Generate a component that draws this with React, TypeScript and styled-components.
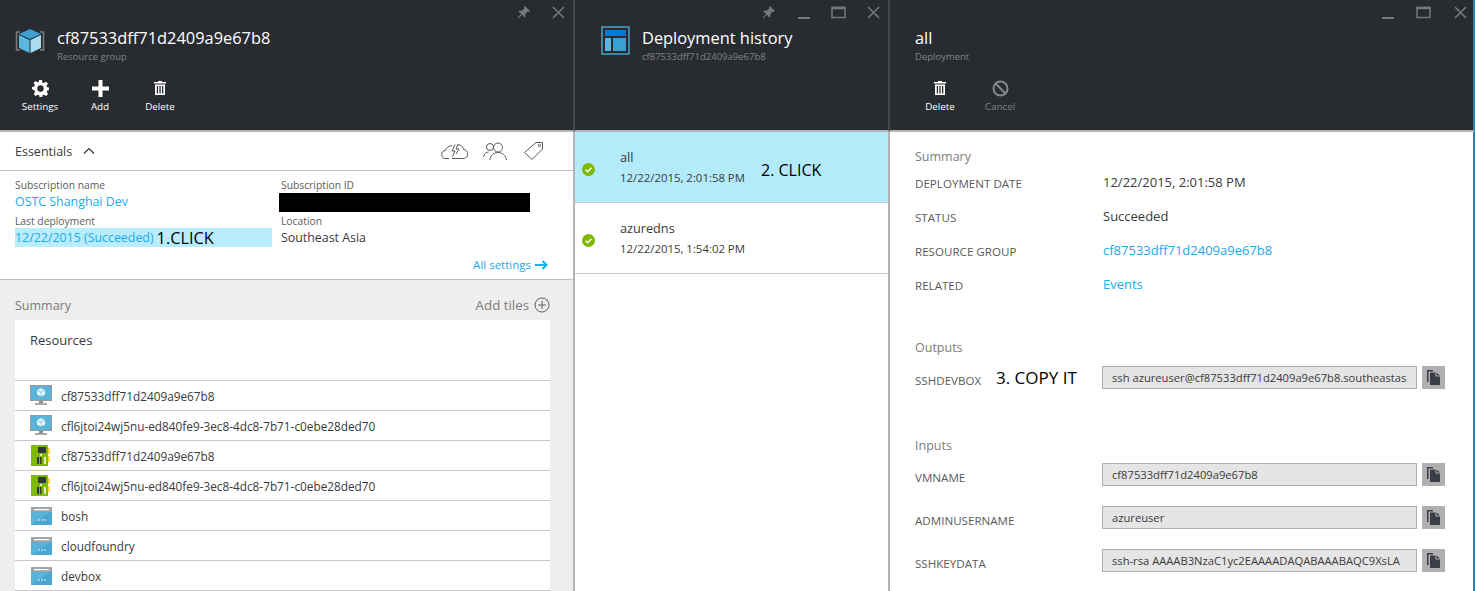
import React from 'react';
import styled, { createGlobalStyle } from 'styled-components';

const GlobalStyle = createGlobalStyle`
  html, body {
    margin: 0;
    padding: 0;
    height: 591px;
    overflow: hidden;
    background: #ffffff;
    font-family: "Open Sans", "Liberation Sans", sans-serif;
  }
  * { box-sizing: border-box; }
`;

const Page = styled.div`
  display: flex;
  width: 1475px;
  height: 591px;
  overflow: hidden;
`;

const Blade = styled.section<{ $width: number; $edge?: boolean }>`
  display: flex;
  flex-direction: column;
  flex: none;
  width: ${(p) => p.$width}px;
  height: 591px;
  border-right: ${(p) => (p.$edge ? '2px solid #2f7fa8' : '2px solid #b4b4b4')};
`;

const Header = styled.header<{ $edge?: boolean }>`
  flex: none;
  height: 132px;
  margin-right: -2px;
  background: #282c30;
  border-bottom: 2px solid #b4b4b4;
  border-right: 2px solid ${(p) => (p.$edge ? '#2f7fa8' : '#44484c')};
  display: flex;
  flex-direction: column;
`;

const WindowBar = styled.div<{ $gap: number; $right: number }>`
  display: flex;
  justify-content: flex-end;
  align-items: center;
  gap: ${(p) => p.$gap}px;
  height: 24px;
  margin-bottom: 2px;
  padding-right: ${(p) => p.$right}px;
`;

const WindowButton = styled.span`
  display: flex;
  align-items: center;
  justify-content: center;
  width: 26px;
  height: 24px;
  color: #75787b;
`;

const TitleRow = styled.div<{ $left: number; $gap: number }>`
  display: flex;
  align-items: flex-start;
  height: 46px;
  padding-left: ${(p) => p.$left}px;
  gap: ${(p) => p.$gap}px;
`;

const TitleText = styled.div`
  display: flex;
  flex-direction: column;
`;

const Title = styled.div`
  font-size: 16.4px;
  line-height: 24px;
  color: #ffffff;
`;

const Subtitle = styled.div`
  font-size: 9.5px;
  line-height: 14px;
  color: #7f8386;
`;

const Commands = styled.div<{ $left: number }>`
  display: flex;
  padding-left: ${(p) => p.$left}px;
  margin-top: 6px;
`;

const Command = styled.div<{ $muted?: boolean }>`
  display: flex;
  flex-direction: column;
  align-items: center;
  width: 60px;
  height: 36px;
  gap: 3px;
  font-size: 9.8px;
  line-height: 12px;
  font-weight: 500;
  color: ${(p) => (p.$muted ? '#7d8083' : '#ffffff')};
`;

const CommandIcon = styled.span`
  display: flex;
  align-items: center;
  justify-content: center;
  height: 20px;
`;

const EssentialsBar = styled.div`
  flex: none;
  display: flex;
  align-items: center;
  justify-content: space-between;
  height: 39px;
  padding: 0 29px 0 15px;
  border-bottom: 1px solid #bdbdbd;
`;

const EssentialsLabel = styled.div`
  display: flex;
  align-items: center;
  gap: 11px;
  font-size: 12.5px;
  color: #3a3a3a;
`;

const EssentialsIcons = styled.div`
  display: flex;
  align-items: center;
  gap: 15px;
  color: #555a5e;
`;

const Details = styled.div`
  flex: none;
  display: grid;
  grid-template-columns: 257px 1fr;
  column-gap: 9px;
  padding: 6px 0 0 15px;
  height: 81px;
`;

const DetailGroup = styled.div`
  display: flex;
  flex-direction: column;
`;

const DetailLabel = styled.div`
  height: 15px;
  font-size: 10.3px;
  line-height: 17px;
  color: #5c5c5c;
`;

const DetailValue = styled.div<{ $link?: boolean; $highlight?: boolean }>`
  display: flex;
  align-items: center;
  height: 19px;
  margin-bottom: 2px;
  font-size: 12.4px;
  white-space: nowrap;
  color: ${(p) => (p.$link ? '#22a9ea' : '#3a3a3a')};
  background: ${(p) => (p.$highlight ? '#b9ecfc' : 'transparent')};
`;

const Redacted = styled.div`
  width: 251px;
  height: 19px;
  margin: 1px 0 1px -2px;
  background: #000000;
`;

const Annotation = styled.span`
  font-size: 16px;
  color: #000000;
  white-space: nowrap;
`;

const FirstClick = styled(Annotation)`
  margin-left: 3px;
  font-size: 16.3px;
`;

const AllSettings = styled.div`
  flex: none;
  display: flex;
  justify-content: flex-end;
  align-items: center;
  gap: 4px;
  height: 28px;
  padding: 0 25px 2px 0;
  font-size: 11.5px;
  color: #22a9ea;
  border-bottom: 1px solid #bdbdbd;
`;

const SummaryArea = styled.div`
  flex: 1;
  min-height: 0;
  background: #eeeeee;
  padding: 0 23px 0 15px;
  display: flex;
  flex-direction: column;
`;

const SummaryBar = styled.div`
  flex: none;
  display: flex;
  justify-content: space-between;
  align-items: center;
  height: 40px;
  padding-top: 10px;
  font-size: 12.5px;
  color: #7c7c7c;
`;

const AddTiles = styled.div`
  display: flex;
  align-items: center;
  gap: 5px;
  font-size: 13.3px;
`;

const ResourceCard = styled.div`
  flex: 1;
  background: #ffffff;
`;

const CardTitle = styled.div`
  height: 61px;
  padding: 11px 15px;
  font-size: 13px;
  line-height: 18px;
  color: #3a3a3a;
  border-bottom: 1px solid #c8c8c8;
`;

const ResourceRow = styled.div`
  display: flex;
  align-items: center;
  gap: 9px;
  height: 30px;
  padding-left: 15px;
  font-size: 11.8px;
  color: #3a3a3a;
  border-bottom: 1px solid #c8c8c8;
`;

const ResourceSlot = styled.span`
  display: flex;
  justify-content: center;
  flex: none;
  width: 22px;
`;

const HistoryRow = styled.div<{ $active?: boolean }>`
  position: relative;
  flex: none;
  display: flex;
  align-items: center;
  height: 71px;
  padding-left: 7px;
  gap: 25px;
  background: ${(p) => (p.$active ? '#b3ebfb' : '#ffffff')};
  border-bottom: 1px solid #c8c8c8;
`;

const HistoryText = styled.div`
  display: flex;
  flex-direction: column;
  gap: 5px;
`;

const HistoryName = styled.div`
  font-size: 12.7px;
  line-height: 16px;
  color: #3a3a3a;
`;

const HistoryDate = styled.div`
  font-size: 11.4px;
  line-height: 15px;
  color: #3a3a3a;
`;

const SecondClick = styled(Annotation)`
  position: absolute;
  left: 186px;
  top: 27px;
`;

const BadgeSvg = styled.svg`
  flex: none;
  margin-top: 4px;
`;

const DeploymentBody = styled.div`
  flex: 1;
  padding: 16px 0 0 25px;
  display: flex;
  flex-direction: column;
`;

const SectionTitle = styled.div<{ $top: number }>`
  margin-top: ${(p) => p.$top}px;
  font-size: 12.5px;
  line-height: 18px;
  color: #7c7c7c;
`;

const InfoRow = styled.div`
  display: grid;
  grid-template-columns: 188px 1fr;
  align-items: center;
  height: 34px;
`;

const InfoLabel = styled.div`
  font-size: 11.6px;
  color: #5c5c5c;
`;

const InfoValue = styled.div<{ $link?: boolean }>`
  margin-bottom: 2px;
  font-size: 13px;
  color: ${(p) => (p.$link ? '#22a9ea' : '#3a3a3a')};
`;

const FieldRow = styled.div<{ $top: number }>`
  display: grid;
  grid-template-columns: 81px 106px 320px 23px;
  align-items: center;
  height: 23px;
  margin-top: ${(p) => p.$top}px;
`;

const FieldLabel = styled.div`
  grid-column: 1 / span 2;
  margin-top: 5px;
  font-size: 11.6px;
  color: #5c5c5c;
`;

const OutputLabel = styled(FieldLabel)`
  grid-column: 1;
`;

const ThirdClick = styled(Annotation)`
  font-size: 17px;
`;

const FieldInput = styled.div`
  grid-column: 3;
  height: 23px;
  width: 315px;
  padding: 0 9px;
  border: 1px solid #aeaeae;
  background: #e5e5e5;
`;

const FieldText = styled.div`
  font-size: 11.2px;
  line-height: 21px;
  color: #3a3a3a;
  white-space: nowrap;
  overflow: hidden;
`;

const CopyButton = styled.div`
  grid-column: 4;
  width: 23px;
  height: 23px;
  display: flex;
  align-items: center;
  justify-content: center;
  background: #b0b0b0;
  color: #3a3f47;
`;

const PinIcon = () => (
  <svg width="15" height="15" viewBox="0 0 15 15" fill="currentColor">
    <path d="M9 1l5 5-1.2 1-1-.4-2.600 2.600.3 2.400-1 1-2.600-2.800-3.600 3.700-.8-.8 3.700-3.600-2.800-2.600 1-1 2.400.3 2.600-2.600L8 2.200z" />
  </svg>
);

const MinimizeIcon = () => (
  <svg width="15" height="15" viewBox="0 0 15 15" fill="currentColor">
    <rect x="2" y="12" width="12" height="2" />
  </svg>
);

const MaximizeIcon = () => (
  <svg width="15" height="15" viewBox="0 0 15 15" fill="none" stroke="currentColor">
    <rect x="1" y="2.500" width="13" height="10" strokeWidth="1.500" />
    <rect x="1" y="2" width="13" height="2" fill="currentColor" strokeWidth="0.500" />
  </svg>
);

const CloseIcon = () => (
  <svg width="15" height="15" viewBox="0 0 15 15" fill="none" stroke="currentColor" strokeWidth="1.600">
    <path d="M2 2l11 11M13 2L2 13" />
  </svg>
);

const CubeLogo = () => (
  <svg width="32" height="30" viewBox="0 0 32 30">
    <path d="M6 6H2.500v18H6M26 6h3.500v18H26" fill="none" stroke="#7b7e80" strokeWidth="1.500" />
    <path d="M16 3l11 5-11 5L5 8z" fill="#3b9fd0" />
    <path d="M5 9l10.500 5v13L5 22z" fill="#5ab7dd" />
    <path d="M27 9l-10.500 5v13L27 22z" fill="#a9dcef" />
  </svg>
);

const HistoryLogo = () => (
  <svg width="29" height="29" viewBox="0 0 29 29">
    <rect x="1" y="1" width="27" height="27" fill="#282c30" stroke="#4aa3cc" strokeWidth="1.500" />
    <rect x="4" y="4" width="21" height="6" fill="#0a78d0" />
    <rect x="4" y="12" width="6" height="13" fill="#5ab4dd" />
    <rect x="12" y="12" width="13" height="13" fill="#3b9fd0" />
  </svg>
);

const GearIcon = () => (
  <svg width="17" height="17" viewBox="0 0 24 24" fill="#ffffff">
    <path
      fillRule="evenodd"
      d="M10 0h4l.7 3.400 2 .8 3-1.900 2.800 2.800-1.900 3 .8 2 3.600.7v3.400l-3.400.7-.8 2 1.900 2.900-2.800 2.800-3-1.900-2 .8-.7 3.300h-3.400l-.7-3.300-2-.8-2.900 1.900-2.800-2.800 1.900-3-.8-2L0 13.200v-3.400l3.300-.7.8-2-1.900-2.900L5 1.400l3 1.900 1.300-.5zM12 7.500a4.500 4.500 0 100 9 4.500 4.500 0 000-9z"
    />
  </svg>
);

const PlusIcon = () => (
  <svg width="17" height="17" viewBox="0 0 17 17" fill="#ffffff">
    <path d="M6.500 0h4v6.500H17v4h-6.500V17h-4v-6.500H0v-4h6.500z" />
  </svg>
);

const TrashIcon = () => (
  <svg width="12" height="14" viewBox="0 0 12 14" fill="#ffffff">
    <path d="M4 0h4v1h4v1.500H0V1h4z" />
    <path fillRule="evenodd" d="M1 3.500h10V14H1zM2.800 5v7.500h1.300V5zm2.600 0v7.500h1.300V5zm2.600 0v7.500h1.300V5z" />
  </svg>
);

const BanIcon = () => (
  <svg width="17" height="17" viewBox="0 0 17 17" fill="none" stroke="#85888a" strokeWidth="2">
    <circle cx="8.500" cy="8.500" r="7" />
    <path d="M3.500 3.500l10 10" />
  </svg>
);

const CloudBoltIcon = () => (
  <svg width="27" height="17" viewBox="0 0 27 17" fill="none" stroke="currentColor">
    <path d="M8 15.500H5a4 4 0 01-.5-8C5.500 4 8 2.500 11 2.800M17 2c3-.5 5 1.500 5.500 4.500a4.500 4.500 0 01-.5 9H11" />
    <path d="M14 1.500L11 8h3l-2.500 5.500M17 1l-2 5h3l-3 5" />
  </svg>
);

const PeopleIcon = () => (
  <svg width="25" height="19" viewBox="0 0 25 19" fill="none" stroke="currentColor">
    <circle cx="7" cy="5" r="3.500" />
    <circle cx="15" cy="5.500" r="4.500" />
    <path d="M.5 15c.5-3 2.500-5 5-5M7 18c0-4.500 3.500-7.500 8-7.500s8 3 8.500 7.500" />
  </svg>
);

const TagIcon = () => (
  <svg width="21" height="20" viewBox="0 0 21 20" fill="none" stroke="currentColor">
    <path d="M13 1.500h6.500V8L9 18.500 1.500 11.500z" />
    <circle cx="16.500" cy="4.500" r="1.200" />
  </svg>
);

const ChevronUp = () => (
  <svg width="12" height="8" viewBox="0 0 12 8" fill="none" stroke="#3a3a3a" strokeWidth="1.200">
    <path d="M1 6.500l5-5 5 5" />
  </svg>
);

const ArrowRight = () => (
  <svg width="13" height="10" viewBox="0 0 13 10" fill="none" stroke="#00b7f0" strokeWidth="2">
    <path d="M0 5h11M7.500 1l4 4-4 4" />
  </svg>
);

const CirclePlus = () => (
  <svg width="16" height="16" viewBox="0 0 16 16" fill="none" stroke="#5c5c5c">
    <circle cx="8" cy="8" r="7" />
    <path d="M8 4v8M4 8h8" />
  </svg>
);

const CheckBadge = () => (
  <BadgeSvg width="13" height="13" viewBox="0 0 13 13">
    <circle cx="6.500" cy="6.500" r="6.500" fill="#7fb800" />
    <path d="M3.500 6.700l2.200 2.100 3.800-4" fill="none" stroke="#ffffff" strokeWidth="1.500" />
  </BadgeSvg>
);

const CopyIcon = () => (
  <svg width="13" height="15" viewBox="0 0 13 15" fill="currentColor">
    <path d="M0 0h6v1.500H1.500V12H0z" />
    <path d="M3 2.500h5.500v4H13V15H3zM9.500 2.500l3.500 3h-3.500z" />
  </svg>
);

const VmIcon = () => (
  <svg width="22" height="21" viewBox="0 0 22 21">
    <rect x="0.500" y="0.500" width="21" height="15" fill="#59b4d9" stroke="#9a9a9a" />
    <path d="M11 3l4 2-4 2-4-2z" fill="#d8eff8" />
    <path d="M7 5.500l3.700 2v4L7 9.500zM15 5.500l-3.700 2v4l3.700-2z" fill="#eef8fc" />
    <rect x="9" y="16" width="4" height="2" fill="#8a8a8a" />
    <rect x="5" y="18" width="12" height="2" fill="#a8a8a8" />
  </svg>
);

const StorageIcon = () => (
  <svg width="20" height="21" viewBox="0 0 20 21">
    <rect x="0" y="0" width="17" height="21" fill="#7fba00" />
    <rect x="17" y="3" width="2" height="6" fill="#ffd83b" />
    <rect x="17" y="11" width="2" height="6" fill="#ffd83b" />
    <rect x="7" y="2" width="8" height="6" fill="#32383f" />
    <rect x="6" y="12" width="2" height="7" fill="#32383f" />
    <rect x="9" y="12" width="1.500" height="7" fill="#32383f" />
    <rect x="13" y="12" width="2" height="7" fill="#e6e8c8" />
    <rect x="9" y="9" width="2" height="2" fill="#e6e8c8" />
  </svg>
);

const NetworkIcon = () => (
  <svg width="21" height="18" viewBox="0 0 21 18">
    <rect x="0" y="0" width="21" height="18" fill="#59b4d9" />
    <path d="M0 18L21 4v14z" fill="#4aa8d0" />
    <rect x="0" y="0" width="21" height="5" fill="#9fa4a8" />
    <rect x="3" y="2" width="15" height="1.200" fill="#ffffff" />
    <circle cx="8" cy="13" r="0.800" fill="#ffffff" />
    <circle cx="11" cy="13" r="0.800" fill="#ffffff" />
    <circle cx="14" cy="13" r="0.800" fill="#ffffff" />
  </svg>
);

const resources = [
  { kind: 'vm', name: 'cf87533dff71d2409a9e67b8' },
  { kind: 'vm', name: 'cfl6jtoi24wj5nu-ed840fe9-3ec8-4dc8-7b71-c0ebe28ded70' },
  { kind: 'storage', name: 'cf87533dff71d2409a9e67b8' },
  { kind: 'storage', name: 'cfl6jtoi24wj5nu-ed840fe9-3ec8-4dc8-7b71-c0ebe28ded70' },
  { kind: 'net', name: 'bosh' },
  { kind: 'net', name: 'cloudfoundry' },
  { kind: 'net', name: 'devbox' },
];

const ResourceIcon = ({ kind }: { kind: string }) => {
  if (kind === 'vm') return <VmIcon />;
  if (kind === 'storage') return <StorageIcon />;
  return <NetworkIcon />;
};

export default function App() {
  return (
    <Page>
      <GlobalStyle />
      <Blade $width={575}>
        <Header>
          <WindowBar $gap={9} $right={2}>
            <WindowButton><PinIcon /></WindowButton>
            <WindowButton><CloseIcon /></WindowButton>
          </WindowBar>
          <TitleRow $left={14} $gap={11}>
            <CubeLogo />
            <TitleText>
              <Title>cf87533dff71d2409a9e67b8</Title>
              <Subtitle>Resource group</Subtitle>
            </TitleText>
          </TitleRow>
          <Commands $left={10}>
            <Command><CommandIcon><GearIcon /></CommandIcon>Settings</Command>
            <Command><CommandIcon><PlusIcon /></CommandIcon>Add</Command>
            <Command><CommandIcon><TrashIcon /></CommandIcon>Delete</Command>
          </Commands>
        </Header>
        <EssentialsBar>
          <EssentialsLabel>Essentials <ChevronUp /></EssentialsLabel>
          <EssentialsIcons>
            <CloudBoltIcon />
            <PeopleIcon />
            <TagIcon />
          </EssentialsIcons>
        </EssentialsBar>
        <Details>
          <DetailGroup>
            <DetailLabel>Subscription name</DetailLabel>
            <DetailValue $link>OSTC Shanghai Dev</DetailValue>
            <DetailLabel>Last deployment</DetailLabel>
            <DetailValue $link $highlight>
              12/22/2015 (Succeeded)<FirstClick>1.CLICK</FirstClick>
            </DetailValue>
          </DetailGroup>
          <DetailGroup>
            <DetailLabel>Subscription ID</DetailLabel>
            <Redacted />
            <DetailLabel>Location</DetailLabel>
            <DetailValue>Southeast Asia</DetailValue>
          </DetailGroup>
        </Details>
        <AllSettings>All settings <ArrowRight /></AllSettings>
        <SummaryArea>
          <SummaryBar>
            Summary
            <AddTiles>Add tiles <CirclePlus /></AddTiles>
          </SummaryBar>
          <ResourceCard>
            <CardTitle>Resources</CardTitle>
            {resources.map((r, i) => (
              <ResourceRow key={i}>
                <ResourceSlot><ResourceIcon kind={r.kind} /></ResourceSlot>
                {r.name}
              </ResourceRow>
            ))}
          </ResourceCard>
        </SummaryArea>
      </Blade>

      <Blade $width={315}>
        <Header>
          <WindowBar $gap={9} $right={2}>
            <WindowButton><PinIcon /></WindowButton>
            <WindowButton><MinimizeIcon /></WindowButton>
            <WindowButton><MaximizeIcon /></WindowButton>
            <WindowButton><CloseIcon /></WindowButton>
          </WindowBar>
          <TitleRow $left={26} $gap={12}>
            <HistoryLogo />
            <TitleText>
              <Title>Deployment history</Title>
              <Subtitle>cf87533dff71d2409a9e67b8</Subtitle>
            </TitleText>
          </TitleRow>
        </Header>
        <HistoryRow $active>
          <CheckBadge />
          <HistoryText>
            <HistoryName>all</HistoryName>
            <HistoryDate>12/22/2015, 2:01:58 PM</HistoryDate>
          </HistoryText>
          <SecondClick>2. CLICK</SecondClick>
        </HistoryRow>
        <HistoryRow>
          <CheckBadge />
          <HistoryText>
            <HistoryName>azuredns</HistoryName>
            <HistoryDate>12/22/2015, 1:54:02 PM</HistoryDate>
          </HistoryText>
        </HistoryRow>
      </Blade>

      <Blade $width={585} $edge>
        <Header $edge>
          <WindowBar $gap={10.5} $right={0}>
            <WindowButton><MinimizeIcon /></WindowButton>
            <WindowButton><MaximizeIcon /></WindowButton>
            <WindowButton><CloseIcon /></WindowButton>
          </WindowBar>
          <TitleRow $left={25} $gap={0}>
            <TitleText>
              <Title>all</Title>
              <Subtitle>Deployment</Subtitle>
            </TitleText>
          </TitleRow>
          <Commands $left={20}>
            <Command><CommandIcon><TrashIcon /></CommandIcon>Delete</Command>
            <Command $muted><CommandIcon><BanIcon /></CommandIcon>Cancel</Command>
          </Commands>
        </Header>
        <DeploymentBody>
          <SectionTitle $top={0}>Summary</SectionTitle>
          <InfoRow>
            <InfoLabel>DEPLOYMENT DATE</InfoLabel>
            <InfoValue>12/22/2015, 2:01:58 PM</InfoValue>
          </InfoRow>
          <InfoRow>
            <InfoLabel>STATUS</InfoLabel>
            <InfoValue>Succeeded</InfoValue>
          </InfoRow>
          <InfoRow>
            <InfoLabel>RESOURCE GROUP</InfoLabel>
            <InfoValue $link>cf87533dff71d2409a9e67b8</InfoValue>
          </InfoRow>
          <InfoRow>
            <InfoLabel>RELATED</InfoLabel>
            <InfoValue $link>Events</InfoValue>
          </InfoRow>
          <SectionTitle $top={37}>Outputs</SectionTitle>
          <FieldRow $top={9}>
            <OutputLabel>SSHDEVBOX</OutputLabel>
            <ThirdClick>3. COPY IT</ThirdClick>
            <FieldInput><FieldText>ssh azureuser@cf87533dff71d2409a9e67b8.southeastas</FieldText></FieldInput>
            <CopyButton><CopyIcon /></CopyButton>
          </FieldRow>
          <SectionTitle $top={48}>Inputs</SectionTitle>
          <FieldRow $top={8}>
            <FieldLabel>VMNAME</FieldLabel>
            <FieldInput><FieldText>cf87533dff71d2409a9e67b8</FieldText></FieldInput>
            <CopyButton><CopyIcon /></CopyButton>
          </FieldRow>
          <FieldRow $top={20}>
            <FieldLabel>ADMINUSERNAME</FieldLabel>
            <FieldInput><FieldText>azureuser</FieldText></FieldInput>
            <CopyButton><CopyIcon /></CopyButton>
          </FieldRow>
          <FieldRow $top={20}>
            <FieldLabel>SSHKEYDATA</FieldLabel>
            <FieldInput><FieldText>ssh-rsa AAAAB3NzaC1yc2EAAAADAQABAAABAQC9XsLA</FieldText></FieldInput>
            <CopyButton><CopyIcon /></CopyButton>
          </FieldRow>
        </DeploymentBody>
      </Blade>
    </Page>
  );
}
